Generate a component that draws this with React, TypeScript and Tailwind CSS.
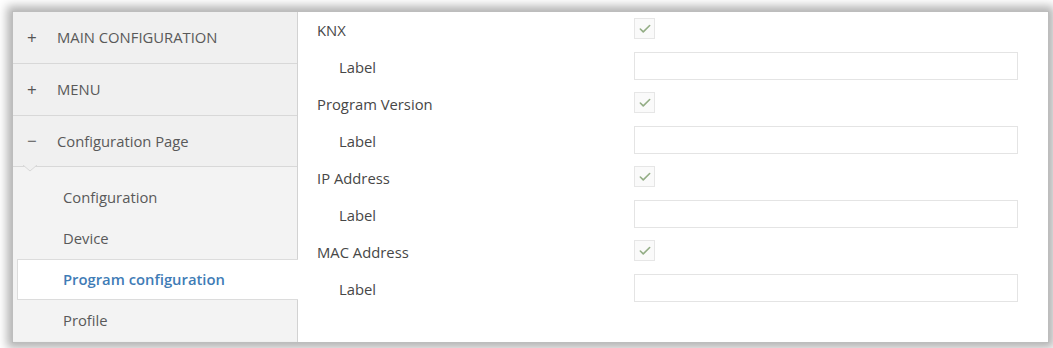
import { Check } from 'lucide-react';

const groups = [
  { label: 'MAIN CONFIGURATION', open: false },
  { label: 'MENU', open: false },
  { label: 'Configuration Page', open: true },
];

const pages = ['Configuration', 'Device', 'Program configuration', 'Profile'];
const activePage = 'Program configuration';

const fields = ['KNX', 'Program Version', 'IP Address', 'MAC Address'];

export default function App() {
  return (
    <div
      className="w-[1053px] h-[348px] bg-white pt-[11px] pl-[12px] pr-[4px] pb-[5px]"
      style={{ fontFamily: '"Open Sans", "Liberation Sans", sans-serif' }}
    >
      <div className="flex h-full border border-[#bdbdbd] bg-white shadow-[0_0_9px_5px_rgba(0,0,0,0.3)]">
        {/* left tree */}
        <div className="w-[285px] flex flex-col bg-[#f0f0f0] border-r border-[#d2d2d2]">
          {groups.map((g, i) => (
            <div
              key={g.label}
              className={`relative flex items-center border-b border-[#d8d8d8] text-[14.8px] text-[#595959] ${
                i === 2 ? 'h-[51px]' : 'h-[52px]'
              }`}
            >
              <span className="w-[44px] pl-[14px] text-[17px] text-[#555]">
                {g.open ? '−' : '+'}
              </span>
              <span>{g.label}</span>
              {g.open && (
                <svg
                  className="absolute left-[10px] -bottom-[6px]"
                  width="14"
                  height="7"
                  viewBox="0 0 14 7"
                >
                  <path d="M0 0 L7 6 L14 0" fill="#f0f0f0" stroke="#d8d8d8" />
                </svg>
              )}
            </div>
          ))}
          <div className="flex flex-col pt-[10px] bg-[#f3f3f3]">
            {pages.map((p) => {
              const active = p === activePage;
              return (
                <div
                  key={p}
                  className={`h-[41px] flex items-center text-[14.8px] ${
                    active
                      ? 'relative z-10 ml-[4px] -mr-px bg-white border-y border-l border-[#dcdcdc] pl-[45px] text-[#3f7cb6] font-semibold'
                      : 'pl-[50px] text-[#595959]'
                  }`}
                >
                  {p}
                </div>
              );
            })}
          </div>
        </div>

        {/* parameters */}
        <div className="flex-1 flex flex-col">
          {fields.map((f) => (
            <div key={f}>
              <div className="h-[37px] flex items-center">
                <div className="w-[336px] pl-[19px] text-[14.8px] text-[#474747]">{f}</div>
                <div className="w-[21px] h-[21px] -mt-[4px] border border-[#e6e6e6] bg-[#fafafa] flex items-center justify-center">
                  <Check size={14} strokeWidth={2.75} className="text-[#93ad85]" />
                </div>
              </div>
              <div className="h-[37px] flex items-center">
                <div className="w-[336px] pl-[41px] text-[14.8px] text-[#474747]">Label</div>
                <div className="w-[384px] h-[28px] -mt-[4px] border border-[#e4e4e4] bg-white" />
              </div>
            </div>
          ))}
        </div>
      </div>
    </div>
  );
}
